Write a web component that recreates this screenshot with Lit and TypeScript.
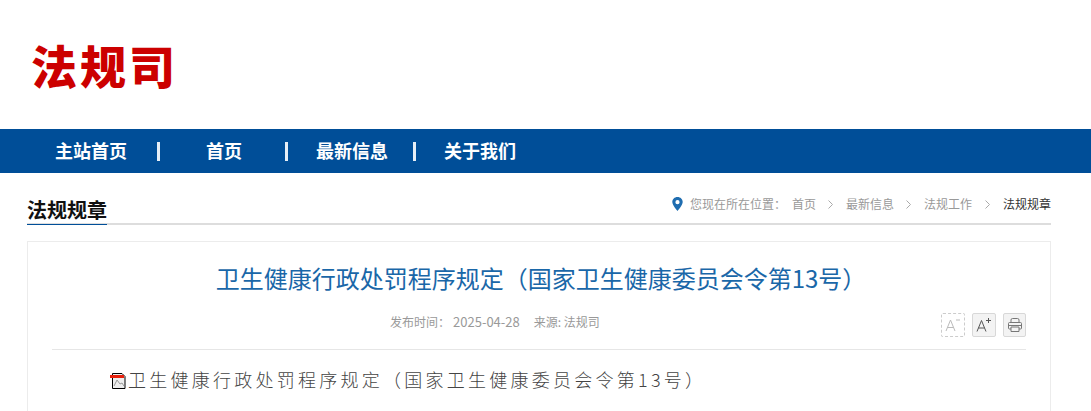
import { html, css, LitElement } from 'lit';
import { customElement } from 'lit/decorators.js';

const NAV = ['主站首页', '首页', '最新信息', '关于我们'];
const CRUMBS = ['首页', '最新信息', '法规工作'];

@customElement('app-root')
export class AppRoot extends LitElement {
  static styles = css`
    :host {
      display: block;
      height: 411px;
      overflow: hidden;
      background: #fff;
      font-family: 'Liberation Sans', 'Noto Sans CJK SC', sans-serif;
    }
    .top {
      height: 129px;
      padding-left: 31px;
      box-sizing: border-box;
    }
    .logo {
      font-family: 'Noto Sans CJK SC', sans-serif;
      font-weight: 900;
      font-size: 46px;
      letter-spacing: 3px;
      line-height: 72px;
      padding-top: 28px;
      color: #cc0000;
    }
    nav {
      height: 44px;
      background: #004e98;
      display: flex;
      align-items: center;
      padding-left: 55px;
    }
    nav a {
      color: #fff;
      font-family: 'Noto Sans CJK SC', sans-serif;
      font-size: 18px;
      font-weight: 700;
      line-height: 42px;
      padding-bottom: 2px;
      white-space: nowrap;
    }
    nav .item {
      width: 72px;
      text-align: center;
    }
    nav .sep {
      width: 3px;
      height: 19px;
      background: #e6eef6;
    }
    nav .s1 { margin: 0 46px 0 30px; }
    nav .s2 { margin: 0 28px 0 43px; }
    nav .s3 { margin: 0 28px 0 25px; }
    .wrap {
      margin: 0 40px 0 27px;
    }
    .head {
      height: 52px;
      box-sizing: border-box;
      border-bottom: 2px solid #dddddd;
      display: flex;
      justify-content: space-between;
      align-items: flex-end;
    }
    .head h2 {
      margin: 0 0 -2px;
      font-family: 'Noto Sans CJK SC', sans-serif;
      font-size: 20px;
      line-height: 28px;
      font-weight: 700;
      color: #111;
      border-bottom: 1px solid #004f99;
      height: 29px;
      box-sizing: border-box;
    }
    .crumbs {
      display: flex;
      align-items: center;
      font-size: 12px;
      line-height: 18px;
      color: #999;
      padding-bottom: 10px;
      font-family: 'Noto Sans CJK SC', sans-serif;
    }
    .crumbs svg.pin {
      margin-right: 7px;
    }
    .crumbs .gap {
      width: 6px;
    }
    .crumbs svg.arrow {
      margin: 0 12.5px;
    }
    .crumbs svg.arrow.last {
      margin: 0 13px;
    }
    .crumbs .here {
      color: #333;
    }
    .card {
      margin-top: 16px;
      border: 1px solid #ececec;
      padding: 0 24px;
      height: 300px;
    }
    h1 {
      margin: 0;
      padding: 19px 0 0 4px;
      text-align: center;
      font-size: 24px;
      line-height: 34px;
      font-weight: 400;
      color: #1a67a8;
      font-family: 'Noto Sans CJK SC', sans-serif;
    }
    .meta {
      position: relative;
      height: 36px;
      margin-top: 18px;
      padding-left: 338px;
      border-bottom: 1px solid #e6e6e6;
      display: flex;
      color: #999;
      font-size: 12px;
      line-height: 18px;
      font-family: 'Noto Sans CJK SC', sans-serif;
    }
    .meta .date {
      margin: 0 14px 0 3px;
      font-size: 13px;
    }
    .tools {
      position: absolute;
      right: 0;
      top: 0;
      display: flex;
      gap: 7px;
    }
    .tools button {
      width: 24px;
      height: 24px;
      padding: 0;
      border: 1px solid #d8d8d8;
      border-radius: 2px;
      background: #f3f3f3;
      display: flex;
      align-items: center;
      justify-content: center;
    }
    .tools button:last-child {
      width: 23px;
    }
    .tools button.off {
      background: #fff;
      border: 1px dashed #cccccc;
    }
    .body {
      display: flex;
      align-items: center;
      padding: 18px 0 0 58px;
      font-size: 18px;
      line-height: 22px;
      letter-spacing: 3.25px;
      color: #444;
      font-weight: 300;
      white-space: nowrap;
      font-family: 'Noto Sans CJK SC', sans-serif;
    }
    .body svg {
      flex: none;
      margin: 4px 2px 0 0;
    }
  `;

  private arrow(last = false) {
    return html`<svg class="arrow ${last ? 'last' : ''}" width="5" height="9" viewBox="0 0 5 9">
      <path d="M.5.5l4 4-4 4" fill="none" stroke="#aaa" />
    </svg>`;
  }

  render() {
    return html`
      <div class="top"><div class="logo">法规司</div></div>
      <nav>
        <a class="item">${NAV[0]}</a><span class="sep s1"></span>
        <a>${NAV[1]}</a><span class="sep s2"></span>
        <a class="item">${NAV[2]}</a><span class="sep s3"></span>
        <a class="item">${NAV[3]}</a>
      </nav>
      <div class="wrap">
        <div class="head">
          <h2>法规规章</h2>
          <div class="crumbs">
            <svg class="pin" width="11" height="14" viewBox="0 0 11 14">
              <path fill-rule="evenodd" fill="#1f6db0" d="M5.500 0C2.500 0 .3 2.200.3 5c0 3.400 5.200 9 5.200 9s5.200-5.600 5.200-9C10.700 2.200 8.500 0 5.500 0zm0 3.100a2.100 2.100 0 1 1 0 4.200 2.100 2.100 0 0 1 0-4.200z" />
            </svg>
            <span>您现在所在位置：</span>
            <span class="gap"></span>
            ${CRUMBS.map((c, i) => html`<span>${c}</span>${this.arrow(i === CRUMBS.length - 1)}`)}
            <span class="here">法规规章</span>
          </div>
        </div>
        <div class="card">
          <h1>卫生健康行政处罚程序规定（国家卫生健康委员会令第13号）</h1>
          <div class="meta">
            <span>发布时间：</span><span class="date">2025-04-28</span><span>来源: 法规司</span>
            <div class="tools">
              <button class="off" aria-label="缩小">
                <svg width="18" height="16" viewBox="0 0 18 16" fill="none" stroke="#bbb">
                  <path d="M2 14L6.500 3 11 14M3.500 10.500h6M12 3h4" />
                </svg>
              </button>
              <button aria-label="放大">
                <svg width="18" height="16" viewBox="0 0 18 16" fill="none" stroke="#555">
                  <path d="M2 14.500L6.500 3.500 11 14.500M3.500 11h6M11 3.500h5M13.500 1v5" />
                </svg>
              </button>
              <button aria-label="打印">
                <svg width="16" height="16" viewBox="0 0 16 16" fill="none" stroke="#777">
                  <path d="M4 5.500V3q0-1.500 1.500-1.500h5Q12 1.500 12 3v2.500M4 12H2.500q-1 0-1-1V6.500q0-1 1-1h11q1 0 1 1V11q0 1-1 1H12M4 10h8v4.500H4zM1.500 8.500h13" />
                </svg>
              </button>
            </div>
          </div>
          <div class="body">
            <svg width="16" height="16" viewBox="0 0 16 16">
              <path d="M2.500.5H12l3 3v12H2.500z" fill="#eee" stroke="#000" />
              <path d="M4 13l3-6 3 4 2-1 2 3" fill="none" stroke="#999" />
              <rect x="0" y="2" width="14" height="3" fill="#e8200c" />
            </svg>
            <span>卫生健康行政处罚程序规定（国家卫生健康委员会令第13号）</span>
          </div>
        </div>
      </div>
    `;
  }
}

declare global {
  interface HTMLElementTagNameMap {
    'app-root': AppRoot;
  }
}
